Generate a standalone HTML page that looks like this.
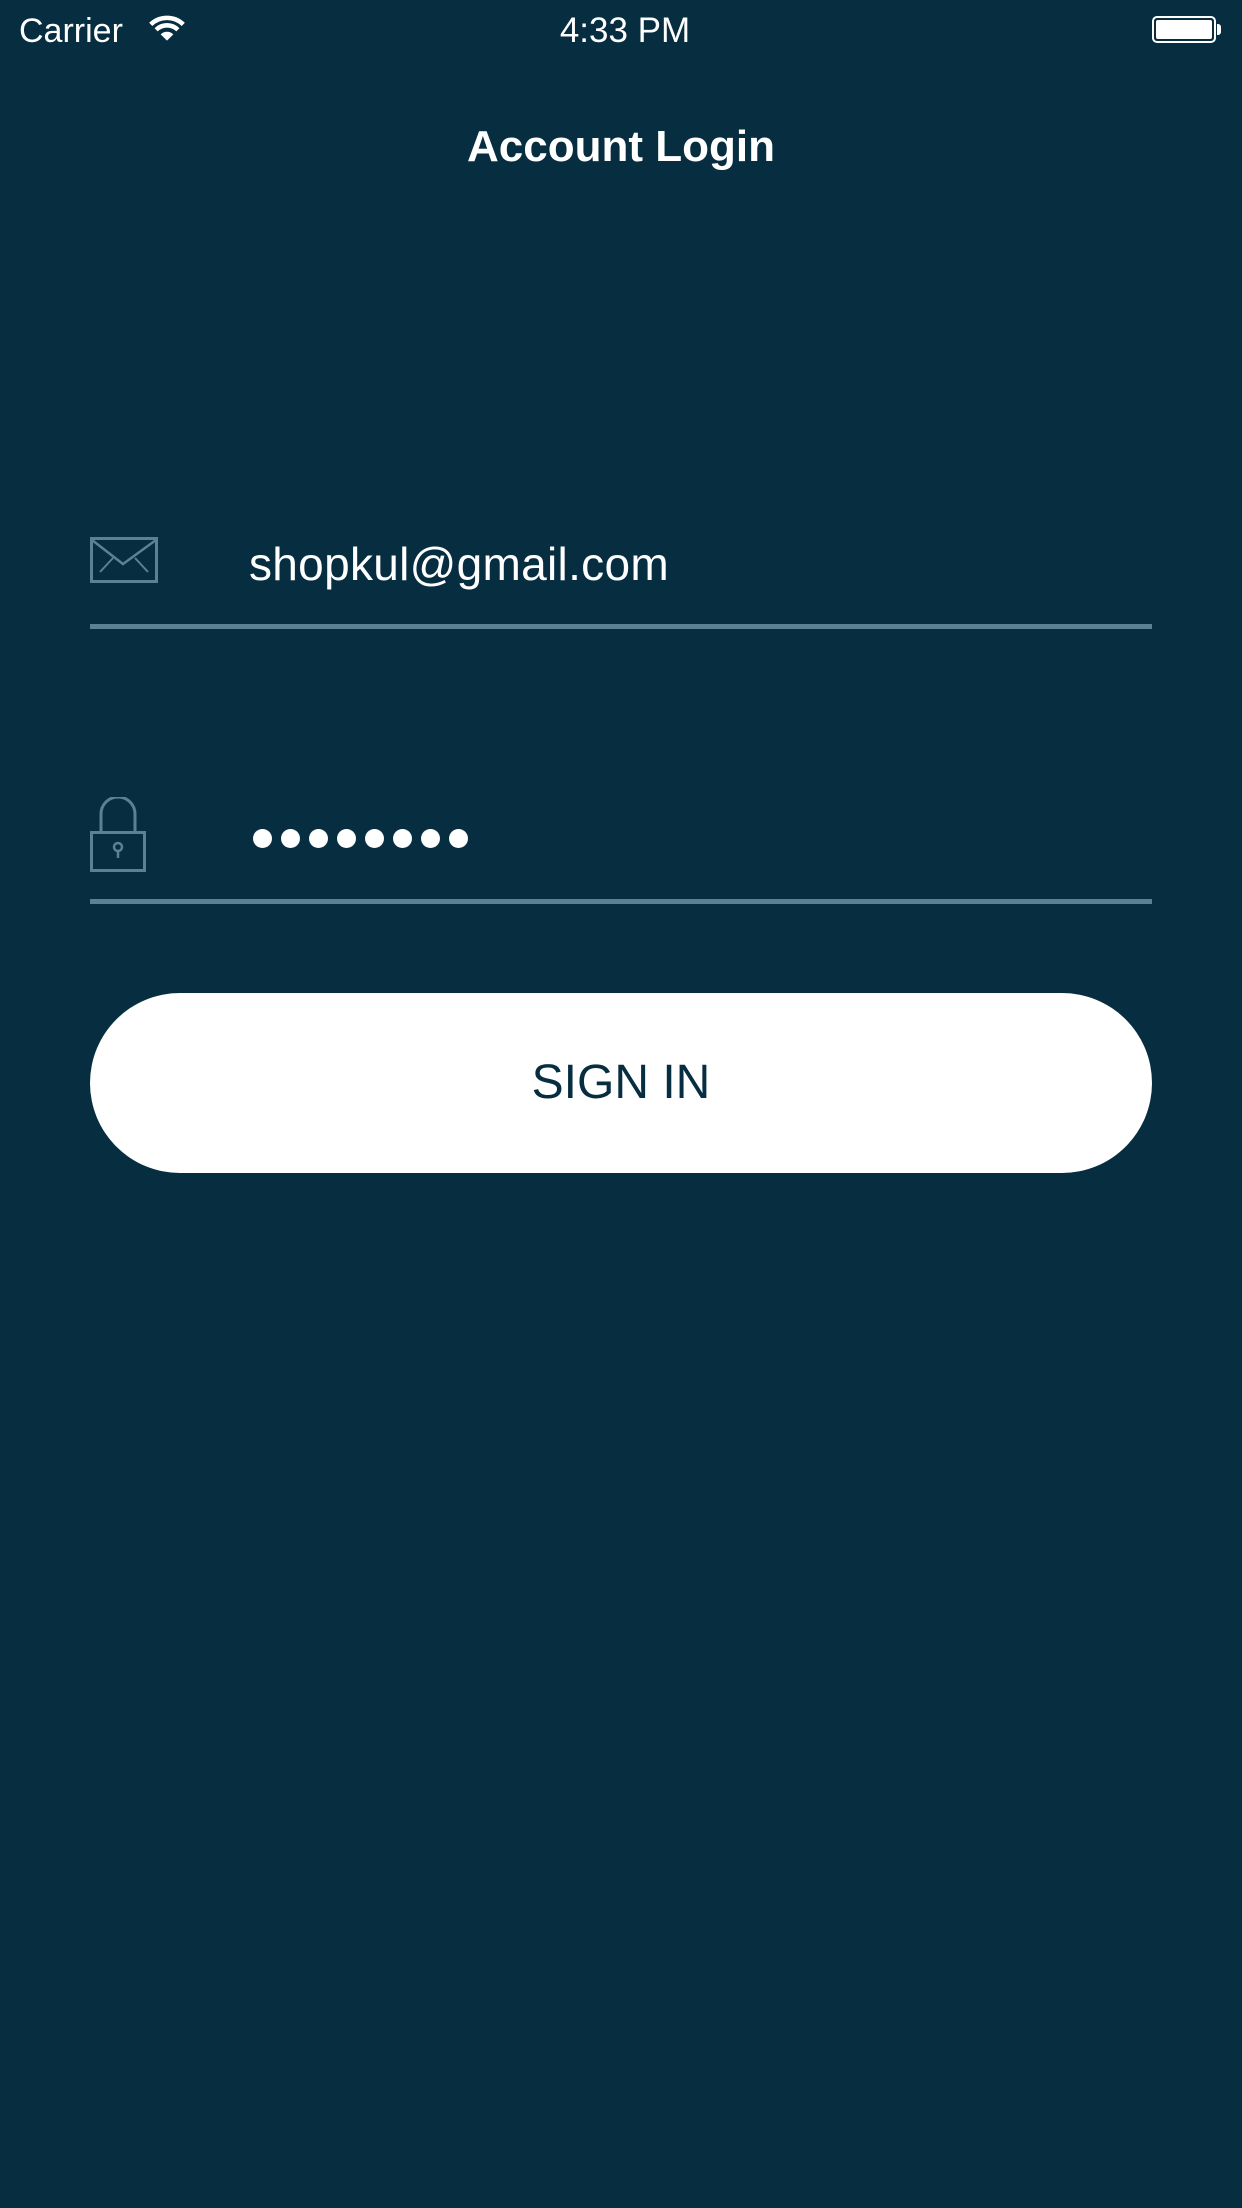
<!DOCTYPE html>
<html><head><meta charset="utf-8"><style>
html,body{margin:0;padding:0;width:1242px;height:2208px;background:#062d40;overflow:hidden;font-family:"Liberation Sans",sans-serif;color:#fff}
.abs{position:absolute}
</style></head><body>
<div class="abs" style="left:19px;top:10px;font-size:34px;line-height:42px">Carrier</div>
<svg class="abs" style="left:148px;top:14px" width="38" height="28" viewBox="0 0 42 30">
<path d="M3 11 A26 26 0 0 1 39 11" stroke="#fff" stroke-width="5" fill="none"/>
<path d="M9 17 A17 17 0 0 1 33 17" stroke="#fff" stroke-width="5" fill="none"/>
<path d="M21 29 L14 22 A10 10 0 0 1 28 22 Z" fill="#fff"/>
</svg>
<div class="abs" style="left:0;width:1250px;text-align:center;top:10px;font-size:35px;line-height:42px">4:33 PM</div>
<div class="abs" style="left:1152px;top:16px;width:64px;height:27px;border:2px solid #fff;border-radius:5px;box-sizing:border-box;padding:2px"><div style="background:#fff;width:100%;height:100%;border-radius:2px"></div></div>
<div class="abs" style="left:1217px;top:24px;width:4px;height:11px;background:#fff;border-radius:0 3px 3px 0"></div>

<div class="abs" style="left:0;width:1242px;text-align:center;top:120px;font-size:44px;font-weight:bold;line-height:54px">Account Login</div>

<svg class="abs" style="left:90px;top:537px" width="68" height="46" viewBox="0 0 68 46">
<rect x="1.5" y="1.5" width="65" height="43" fill="none" stroke="#5b8194" stroke-width="3"/>
<path d="M2 3 L33 27 L66 3" fill="none" stroke="#5b8194" stroke-width="2.5"/>
<path d="M10 35 L23 21 M45 21 L58 35" fill="none" stroke="#5b8194" stroke-width="2"/>
</svg>
<div class="abs" style="left:249px;top:537px;font-size:46px;letter-spacing:0.3px;line-height:54px">shopkul@gmail.com</div>
<div class="abs" style="left:90px;top:624px;width:1062px;height:5px;background:#5b8194"></div>

<svg class="abs" style="left:90px;top:797px" width="58" height="76" viewBox="0 0 58 76">
<path d="M11 35 V17 A17 17 0 0 1 45 17 V35" fill="none" stroke="#5b8194" stroke-width="3"/>
<rect x="1.5" y="35.5" width="53" height="38" fill="none" stroke="#5b8194" stroke-width="3"/>
<circle cx="28" cy="50" r="4" fill="none" stroke="#5b8194" stroke-width="2.5"/>
<path d="M28 54 V61" stroke="#5b8194" stroke-width="2.5"/>
</svg>
<div class="abs" style="left:253px;top:829px;height:19px;display:flex;gap:9px">
<span style="width:19px;height:19px;border-radius:50%;background:#fff"></span><span style="width:19px;height:19px;border-radius:50%;background:#fff"></span><span style="width:19px;height:19px;border-radius:50%;background:#fff"></span><span style="width:19px;height:19px;border-radius:50%;background:#fff"></span><span style="width:19px;height:19px;border-radius:50%;background:#fff"></span><span style="width:19px;height:19px;border-radius:50%;background:#fff"></span><span style="width:19px;height:19px;border-radius:50%;background:#fff"></span><span style="width:19px;height:19px;border-radius:50%;background:#fff"></span>
</div>
<div class="abs" style="left:90px;top:899px;width:1062px;height:5px;background:#5b8194"></div>

<div class="abs" style="left:90px;top:993px;width:1062px;height:180px;border-radius:90px;background:#fff;color:#062d40;text-align:center;line-height:180px;font-size:48px">SIGN IN</div>
</body></html>
